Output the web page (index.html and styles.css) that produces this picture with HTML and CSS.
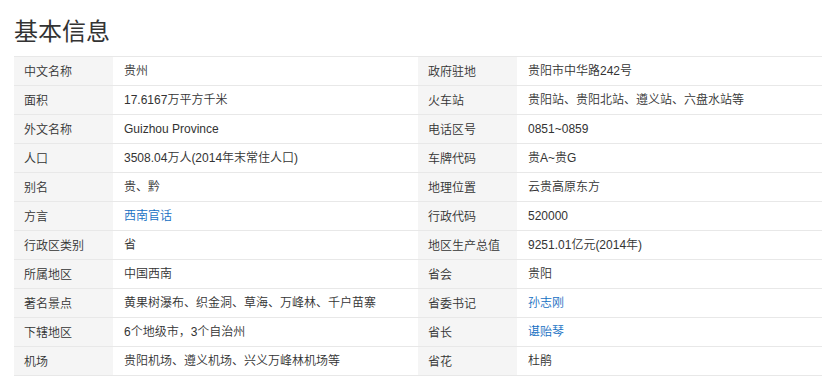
FILE: index.html
```html
<!DOCTYPE html>
<html lang="zh-CN">
<head>
<meta charset="utf-8">
<title>基本信息</title>
<link rel="stylesheet" href="styles.css">
</head>
<body>
<div class="card">
  <h2 class="title">基本信息</h2>
  <div class="info">
    <dl class="col">
      <div class="row"><dt>中文名称</dt><dd>贵州</dd></div>
      <div class="row"><dt>面积</dt><dd>17.6167万平方千米</dd></div>
      <div class="row"><dt>外文名称</dt><dd>Guizhou Province</dd></div>
      <div class="row"><dt>人口</dt><dd>3508.04万人(2014年末常住人口)</dd></div>
      <div class="row"><dt>别名</dt><dd>贵、黔</dd></div>
      <div class="row"><dt>方言</dt><dd><a class="link">西南官话</a></dd></div>
      <div class="row"><dt>行政区类别</dt><dd>省</dd></div>
      <div class="row"><dt>所属地区</dt><dd>中国西南</dd></div>
      <div class="row"><dt>著名景点</dt><dd>黄果树瀑布、织金洞、草海、万峰林、千户苗寨</dd></div>
      <div class="row"><dt>下辖地区</dt><dd>6个地级市，3个自治州</dd></div>
      <div class="row"><dt>机场</dt><dd>贵阳机场、遵义机场、兴义万峰林机场等</dd></div>
    </dl>
    <dl class="col">
      <div class="row"><dt>政府驻地</dt><dd>贵阳市中华路242号</dd></div>
      <div class="row"><dt>火车站</dt><dd>贵阳站、贵阳北站、遵义站、六盘水站等</dd></div>
      <div class="row"><dt>电话区号</dt><dd>0851~0859</dd></div>
      <div class="row"><dt>车牌代码</dt><dd>贵A~贵G</dd></div>
      <div class="row"><dt>地理位置</dt><dd>云贵高原东方</dd></div>
      <div class="row"><dt>行政代码</dt><dd>520000</dd></div>
      <div class="row"><dt>地区生产总值</dt><dd>9251.01亿元(2014年)</dd></div>
      <div class="row"><dt>省会</dt><dd>贵阳</dd></div>
      <div class="row"><dt>省委书记</dt><dd><a class="link">孙志刚</a></dd></div>
      <div class="row"><dt>省长</dt><dd><a class="link">谌贻琴</a></dd></div>
      <div class="row"><dt>省花</dt><dd>杜鹃</dd></div>
    </dl>
  </div>
</div>
</body>
</html>
```

FILE: styles.css
```css
html, body {
  margin: 0;
  padding: 0;
  background: #fff;
}
body {
  font-family: "Liberation Sans", "Noto Sans CJK SC", sans-serif;
  color: #333;
}
.card {
  padding: 14px 15px 0 14px;
}
.title {
  margin: 0 0 10px 0;
  font-family: "Noto Sans CJK SC", sans-serif;
  font-weight: 400;
  font-size: 24px;
  line-height: 32px;
  color: #333;
}
.info {
  display: flex;
  width: 808px;
}
.col {
  margin: 0;
  width: 404px;
  border-top: 1px solid #e8e8e8;
}
.row {
  display: flex;
  height: 28px;
  border-bottom: 1px solid #e8e8e8;
  font-size: 12px;
  line-height: 28px;
  font-weight: 350;
}
.row dt {
  width: 89px;
  padding-left: 10px;
  background: #f5f5f5;
  font-family: "Noto Sans CJK SC", sans-serif;
  white-space: nowrap;
}
.row dd {
  margin: 0;
  padding-left: 11px;
  white-space: nowrap;
}
.link {
  color: #136ec2;
  text-decoration: none;
}
```
